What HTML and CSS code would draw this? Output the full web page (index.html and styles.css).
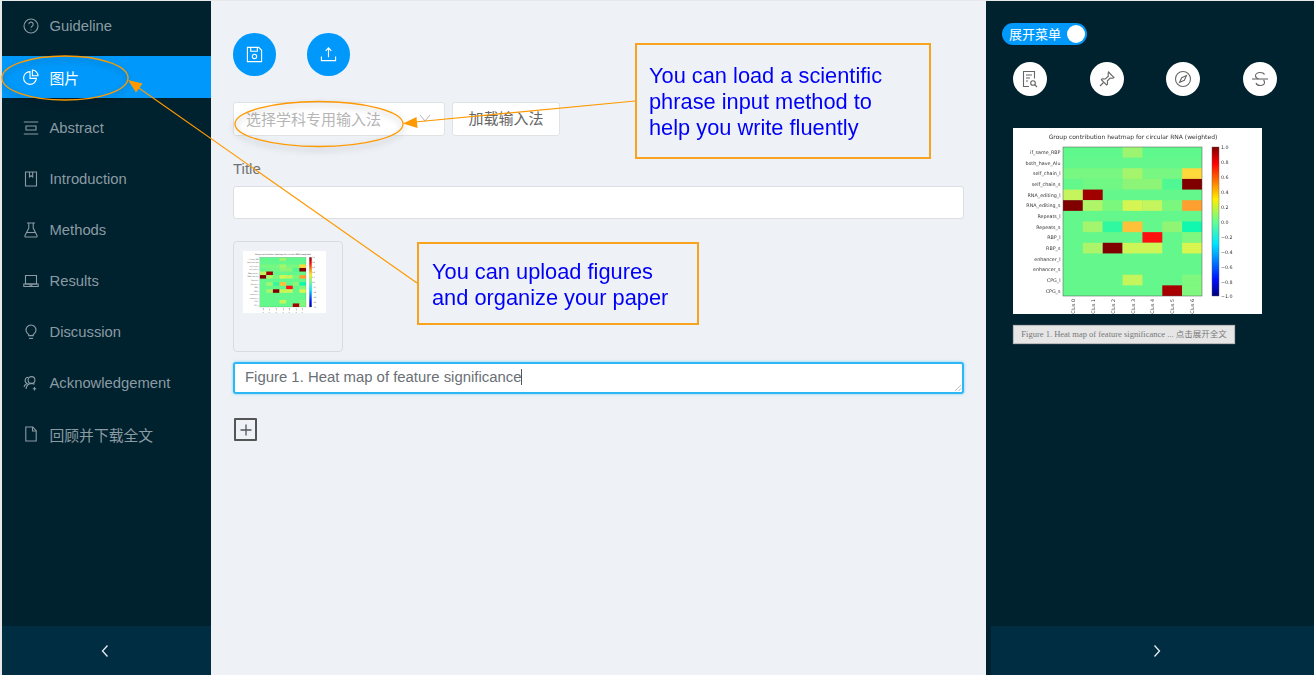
FILE: index.html
```html
<!DOCTYPE html>
<html lang="zh">
<head>
<meta charset="utf-8"/>
<meta content="width=device-width, initial-scale=1.0" name="viewport"/>
<title>Paper editor</title>
<link rel="stylesheet" href="styles.css">
</head>
<body>
<div class="page">
  <aside class="sider">
    <ul class="menu">
      <li class="menu-item">
        <svg class="menu-icon" viewBox="0 0 16 16"><circle cx="8" cy="8" r="7"/><path d="M5.8 6.3a2.2 2.2 0 1 1 3.3 1.9c-.7.4-1.1.8-1.1 1.600"/><path d="M8 11.400v.8"/></svg>
        <span>Guideline</span>
      </li>
      <li class="menu-item active">
        <svg class="menu-icon" viewBox="0 0 16 16"><path d="M7 2.600a6.400 6.400 0 1 0 6.400 6.800H7z"/><path d="M9.400 1a5.800 5.800 0 0 1 5.600 5.800H9.400z"/></svg>
        <span>图片</span>
      </li>
      <li class="menu-item">
        <svg class="menu-icon" viewBox="0 0 16 16"><path d="M.8 2h14.400M.8 14h14.400"/><path d="M3 6h10v4H3z"/></svg>
        <span>Abstract</span>
      </li>
      <li class="menu-item">
        <svg class="menu-icon" viewBox="0 0 16 16"><path d="M2.500 1h11v14h-11z"/><path d="M6.500 1v5l1.600-1.200L9.700 6V1"/></svg>
        <span>Introduction</span>
      </li>
      <li class="menu-item">
        <svg class="menu-icon" viewBox="0 0 16 16"><path d="M4 1h8M5.800 1v5L2 13.600c-.4.8.1 1.400.9 1.400h10.200c.8 0 1.300-.6.9-1.400L10.200 6V1"/><path d="M3.800 10.500h8.400"/></svg>
        <span>Methods</span>
      </li>
      <li class="menu-item">
        <svg class="menu-icon" viewBox="0 0 16 16"><path d="M2.500 2.500h11v8.500h-11z"/><path d="M.8 11h14.400v2.500H.8zM6.500 12.200h3"/></svg>
        <span>Results</span>
      </li>
      <li class="menu-item">
        <svg class="menu-icon" viewBox="0 0 16 16"><path d="M5.700 11.600v-1.200A5 5 0 1 1 10.300 10.400v1.200z"/><path d="M6 14.400h4"/></svg>
        <span>Discussion</span>
      </li>
      <li class="menu-item">
        <svg class="menu-icon" viewBox="0 0 16 16"><circle cx="8.500" cy="5" r="3.400"/><path d="M3 14c.3-3 2.500-5.400 5.500-5.600 1.200 0 2.200.3 3 .9"/><path d="M5.500 2.300A3.200 3.200 0 0 0 4 8.400c-1.600.6-2.600 2-3 3.600M11.500 12v3.400M9.800 13.700h3.400"/></svg>
        <span>Acknowledgement</span>
      </li>
      <li class="menu-item">
        <svg class="menu-icon" viewBox="0 0 16 16"><path d="M2.800 1h7l3.400 3.600V15H2.800z"/><path d="M9.500 1v4h3.700"/></svg>
        <span>回顾并下载全文</span>
      </li>
    </ul>
    <div class="trigger trigger-left">
      <svg class="chevron" viewBox="0 0 10 14"><path d="M7.500 1.500 2.500 7l5 5.500"/></svg>
    </div>
  </aside>

  <main class="content">
    <div class="round-btns">
      <button class="round-btn" type="button">
        <svg viewBox="0 0 18 18"><path d="M1.500 1.500h12l3 3v12h-15z"/><path d="M5 1.500v4h7v-4"/><circle cx="9" cy="11" r="2.300"/></svg>
      </button>
      <button class="round-btn" type="button">
        <svg viewBox="0 0 18 18"><path d="M9 12V2.500M6 5.200 9 2l3 3.200"/><path d="M1.500 11v4.500h15V11"/></svg>
      </button>
    </div>
    <div class="ime-row">
      <div class="select">
        <span>选择学科专用输入法</span>
        <svg class="select-arrow" viewBox="0 0 12 8"><path d="M1 1l5 6 5-6"/></svg>
      </div>
      <button class="btn" type="button">加载输入法</button>
    </div>
    <label class="field-label">Title</label>
    <input class="input" type="text"/>
    <div class="figure-card">
      <svg class="figure-thumb" viewBox="0 0 249 186"><use href="#heatmap"/></svg>
    </div>
    <div class="caption-box">Figure 1. Heat map of feature significance<span class="caret"></span><svg class="grip" viewBox="0 0 8 8"><path d="M1 7 7 1M4.500 7 7 4.500"/></svg></div>
    <button class="add-btn" type="button">
      <svg viewBox="0 0 16 16"><path d="M8 2.500v11M2.500 8h11"/></svg>
    </button>
  </main>

  <aside class="outline">
    <div class="toggle">
      <span>展开菜单</span>
      <i class="toggle-knob"></i>
    </div>
    <div class="tool-row">
      <button class="tool-btn" type="button">
        <svg viewBox="0 0 18 18"><path d="M8 16.500H2.500v-15h11v7"/><path d="M5 5h6M5 8h4M5 11h2"/><circle cx="12" cy="13" r="2.300"/><path d="M13.700 14.700l2.300 2.300"/></svg>
      </button>
      <button class="tool-btn" type="button">
        <svg viewBox="0 0 18 18"><path d="M10.500 2 16 7.500l-1.300.7-2.600-.2-2.800 3 .3 3-1 1-5.300-5.300 1-1 3 .3 3-2.800-.2-2.600z"/><path d="M5.500 12.500 2 16"/></svg>
      </button>
      <button class="tool-btn" type="button">
        <svg viewBox="0 0 18 18"><circle cx="9" cy="9" r="7.500"/><path d="M12.500 5.500 10.300 10.300 5.500 12.500 7.700 7.700z"/></svg>
      </button>
      <button class="tool-btn" type="button">
        <svg viewBox="0 0 18 18"><path d="M1 9h16"/><path d="M13.500 4.500C12.800 3 11 2.500 9 2.500c-2.500 0-4.500 1.300-4.500 3.300 0 1.500 1 2.500 3 3.200M5 13c.5 1.700 2 2.500 4.200 2.500 2.500 0 4.300-1.200 4.300-3.200 0-1-.4-1.700-1-2.300"/></svg>
      </button>
    </div>
    <svg class="figure-preview" viewBox="0 0 249 186">
      <defs>
        <linearGradient id="jet" x1="0" y1="0" x2="0" y2="1">
          <stop offset="0" stop-color="#800000"/>
          <stop offset="0.11" stop-color="#ff0000"/>
          <stop offset="0.35" stop-color="#ffee00"/>
          <stop offset="0.5" stop-color="#66ff90"/>
          <stop offset="0.65" stop-color="#00e5ff"/>
          <stop offset="0.89" stop-color="#0010ff"/>
          <stop offset="1" stop-color="#000080"/>
        </linearGradient>
      </defs>
      <g id="heatmap">
        <rect width="249" height="186" fill="#fff"/>
        <text class="hm-title" x="120" y="11" text-anchor="middle">Group contribution heatmap for circular RNA (weighted)</text>
        <g class="hm-label" text-anchor="end">
          <text x="47.500" y="26">if_same_RBP</text>
          <text x="47.500" y="36.500">both_have_Alu</text>
          <text x="47.500" y="47">self_chain_l</text>
          <text x="47.500" y="58">self_chain_s</text>
          <text x="47.500" y="68.500">RNA_editing_l</text>
          <text x="47.500" y="79">RNA_editing_s</text>
          <text x="47.500" y="90">Repeats_l</text>
          <text x="47.500" y="100.500">Repeats_s</text>
          <text x="47.500" y="111">RBP_l</text>
          <text x="47.500" y="122">RBP_s</text>
          <text x="47.500" y="132.500">enhancer_l</text>
          <text x="47.500" y="143">enhancer_s</text>
          <text x="47.500" y="154">CPG_l</text>
          <text x="47.500" y="164.500">CPG_s</text>
        </g>
        <svg x="50" y="19" width="139" height="149" viewBox="0 0 7 14" preserveAspectRatio="none">
          <rect width="7" height="14" fill="#64f78b"/>
          <rect x="0" y="0" width="7" height="1" fill="#5ff88c"/>
          <rect x="3" y="0" width="1" height="1" fill="#9cf570"/>
          <rect x="0" y="2" width="6" height="1" fill="#78f782"/>
          <rect x="3" y="2" width="1" height="1" fill="#a4f56c"/>
          <rect x="6" y="2" width="1" height="1" fill="#ffd83c"/>
          <rect x="1" y="3" width="2" height="1" fill="#70f784"/>
          <rect x="3" y="3" width="2" height="1" fill="#8cf578"/>
          <rect x="5" y="3" width="1" height="1" fill="#4ff892"/>
          <rect x="6" y="3" width="1" height="1" fill="#800000"/>
          <rect x="0" y="4" width="1" height="1" fill="#c4f55c"/>
          <rect x="1" y="4" width="1" height="1" fill="#a00000"/>
          <rect x="0" y="5" width="1" height="1" fill="#800000"/>
          <rect x="1" y="5" width="1" height="1" fill="#b0f568"/>
          <rect x="2" y="5" width="1" height="1" fill="#7cf77e"/>
          <rect x="3" y="5" width="1" height="1" fill="#d4f552"/>
          <rect x="4" y="5" width="1" height="1" fill="#c4f55c"/>
          <rect x="5" y="5" width="1" height="1" fill="#7cf77e"/>
          <rect x="6" y="5" width="1" height="1" fill="#ff9f30"/>
          <rect x="1" y="7" width="1" height="1" fill="#a4f56e"/>
          <rect x="2" y="7" width="1" height="1" fill="#30f8a0"/>
          <rect x="3" y="7" width="1" height="1" fill="#ffc03a"/>
          <rect x="5" y="7" width="1" height="1" fill="#90f574"/>
          <rect x="6" y="7" width="1" height="1" fill="#10f8b0"/>
          <rect x="4" y="8" width="1" height="1" fill="#ff1010"/>
          <rect x="6" y="8" width="1" height="1" fill="#80f77e"/>
          <rect x="1" y="9" width="1" height="1" fill="#acf56a"/>
          <rect x="2" y="9" width="1" height="1" fill="#800000"/>
          <rect x="3" y="9" width="2" height="1" fill="#ccf558"/>
          <rect x="6" y="9" width="1" height="1" fill="#d8f550"/>
          <rect x="3" y="12" width="1" height="1" fill="#c4f55c"/>
          <rect x="6" y="12" width="1" height="1" fill="#80f77e"/>
          <rect x="5" y="13" width="1" height="1" fill="#a80000"/>
          <rect x="6" y="13" width="1" height="1" fill="#80f77e"/>
        </svg>
        <rect x="50" y="19" width="139" height="149" fill="none" stroke="#555" stroke-width="0.5"/>
        <g class="hm-label" text-anchor="end">
          <text transform="translate(62,171) rotate(-90)">Clus 0</text>
          <text transform="translate(82,171) rotate(-90)">Clus 1</text>
          <text transform="translate(102,171) rotate(-90)">Clus 2</text>
          <text transform="translate(122,171) rotate(-90)">Clus 3</text>
          <text transform="translate(141,171) rotate(-90)">Clus 4</text>
          <text transform="translate(161,171) rotate(-90)">Clus 5</text>
          <text transform="translate(181,171) rotate(-90)">Clus 6</text>
        </g>
        <rect x="199" y="19" width="7" height="149" fill="url(#jet)" stroke="#555" stroke-width="0.4"/>
        <g class="hm-label">
          <text x="208" y="21">1.0</text>
          <text x="208" y="36">0.8</text>
          <text x="208" y="51">0.6</text>
          <text x="208" y="66">0.4</text>
          <text x="208" y="81">0.2</text>
          <text x="208" y="96">0.0</text>
          <text x="208" y="111">−0.2</text>
          <text x="208" y="126">−0.4</text>
          <text x="208" y="141">−0.6</text>
          <text x="208" y="156">−0.8</text>
          <text x="208" y="170">−1.0</text>
        </g>
      </g>
    </svg>
    <div class="preview-caption">Figure 1. Heat map of feature significance ... <span class="cn">点击展开全文</span></div>
    <div class="spacer"></div>
    <div class="trigger trigger-right">
      <svg class="chevron" viewBox="0 0 10 14"><path d="M2.500 1.500 7.500 7l-5 5.500"/></svg>
    </div>
  </aside>
</div>

<!-- annotations drawn on top of the screenshot -->
<svg class="marks" viewBox="0 0 1314 675" width="1314" height="675">
  <ellipse class="ring" cx="65" cy="78" rx="63" ry="22"/>
  <ellipse class="ring" cx="319" cy="124" rx="84" ry="22.500"/>
  <path class="lead" d="M417 283 136 86"/>
  <path class="tip" d="M128 80l14.500 3.500-6.500 9z"/>
  <path class="lead" d="M635 101 415 122"/>
  <path class="tip" d="M403 123.500l13.500-6.500 1 11z"/>
</svg>
<div class="note note-load">You can load a scientific phrase input method to help you write fluently</div>
<div class="note note-upload">You can upload figures and organize your paper</div>
</body>
</html>
```

FILE: styles.css
```css
* { box-sizing: border-box; }
html, body { margin: 0; padding: 0; height: 100%; }
body {
  background: #e6e8ea;
  font-family: "Liberation Sans", "Noto Sans CJK SC", sans-serif;
  font-size: 14px;
  color: #666;
  overflow: hidden;
}
.page { display: flex; height: 674px; margin: 1px 0 0 2px; }

/* left menu */
.sider { width: 209px; background: #00212e; display: flex; flex-direction: column; justify-content: space-between; }
.menu { list-style: none; margin: 0; padding: 4px 0 0; display: flex; flex-direction: column; gap: 9px; }
.menu-item { height: 42px; display: flex; align-items: center; gap: 10.500px; padding-left: 21px; color: #8b9ba3; font-size: 14.800px; }
.menu-item.active { background: #0099fb; color: #fff; }
.menu-icon { width: 16px; height: 16px; fill: none; stroke: currentColor; stroke-width: 1.100; flex: none; }
.trigger { height: 49px; background: #002d42; display: flex; align-items: center; justify-content: center; }
.trigger-left { padding-right: 3px; }
.trigger-right { margin-left: 5px; padding-left: 8px; }
.chevron { width: 10px; height: 14px; fill: none; stroke: #e8edf0; stroke-width: 1.300; }

/* editor */
.content { width: 775px; background: #eef2f6; padding: 32px 22px 0; }
.round-btns { display: flex; gap: 31.500px; margin-bottom: 26.500px; }
.round-btn { width: 42.500px; height: 42.500px; border: 0; border-radius: 50%; padding: 0; background: #0099fb; display: flex; align-items: center; justify-content: center; }
.round-btn svg { width: 17px; height: 17px; fill: none; stroke: #fff; stroke-width: 1.200; }
.ime-row { display: flex; gap: 7px; margin-bottom: 24px; }
.select { width: 212px; height: 34px; background: #fff; border: 1px solid #dfe3e6; border-radius: 3px; display: flex; align-items: center; justify-content: space-between; padding: 0 13px 2px 12px; color: #b5b5b5; font-size: 15px; }
.select-arrow { width: 12px; height: 8px; fill: none; stroke: #b5b5b5; stroke-width: 1; }
.btn { width: 108px; height: 34px; background: #fff; border: 1px solid #dfe3e6; border-radius: 3px; color: #666; font: inherit; font-size: 15px; padding: 0 0 3px; }
.field-label { display: block; font-size: 15px; line-height: 17px; margin-bottom: 9px; color: #6e7276; }
.input { display: block; width: 100%; height: 33px; background: #fff; border: 1px solid #dcdfe2; border-radius: 3px; margin-bottom: 22px; }
.figure-card { width: 110px; height: 111px; border: 1px solid #d9dcdf; border-radius: 4px; padding: 9px; margin-bottom: 10px; }
.figure-thumb { display: block; width: 83px; height: 62px; filter: blur(0.4px); }
.caption-box { position: relative; height: 32px; background: #fff; border: 2px solid #2db7f5; border-radius: 3px; box-shadow: 0 0 3px rgba(45, 183, 245, 0.6); padding: 0 10px; line-height: 27px; font-size: 14.900px; color: #6b7076; margin-bottom: 24px; }
.caret { display: inline-block; width: 1px; height: 16px; background: #555; vertical-align: -3px; }
.grip { position: absolute; right: 0; bottom: 0; width: 8px; height: 8px; fill: none; stroke: #aaa; stroke-width: 0.800; }
.add-btn { display: flex; align-items: center; justify-content: center; width: 23px; height: 23px; margin-left: 1px; padding: 0; background: transparent; border: 2px solid #555; border-radius: 1px; }
.add-btn svg { width: 16px; height: 16px; fill: none; stroke: #555; stroke-width: 1.300; }

/* right panel */
.outline { flex: 1; background: #00212e; display: flex; flex-direction: column; }
.toggle { width: 85px; height: 22px; margin: 22px 0 0 16px; border-radius: 11px; background: #0099fb; color: #fff; font-size: 13px; display: flex; align-items: center; justify-content: space-between; padding: 0 2px 2px 7px; }
.toggle-knob { width: 18px; height: 18px; margin-bottom: -2px; border-radius: 50%; background: #fff; }
.tool-row { display: flex; gap: 42.500px; margin: 17px 0 0 27px; }
.tool-btn { width: 34px; height: 34px; border: 0; border-radius: 50%; padding: 0; background: #fff; display: flex; align-items: center; justify-content: center; }
.tool-btn svg { width: 18px; height: 18px; fill: none; stroke: #666; stroke-width: 1.100; }
.figure-preview { display: block; width: 249px; height: 186px; margin: 32px 0 0 27px; flex: none; filter: blur(0.4px); }
.preview-caption { width: 222px; height: 19px; margin: 11px 0 0 27px; background: #e6e6e6; border: 1px solid #bbb; box-shadow: 0 0 1px #888; font-family: "Liberation Serif", "Noto Sans CJK SC", serif; font-size: 8.500px; line-height: 17px; text-align: center; color: #777; white-space: nowrap; }
.spacer { flex: 1; }

/* heatmap */
.hm-title { font-family: "DejaVu Sans", sans-serif; font-size: 6px; fill: #333; }
.hm-label { font-family: "DejaVu Sans", sans-serif; font-size: 4.800px; fill: #333; }

/* annotations */
.marks { position: absolute; left: 0; top: 0; pointer-events: none; }
.ring { fill: none; stroke: #f90; stroke-width: 1.300; filter: drop-shadow(0 3px 3px rgba(0, 0, 0, 0.3)); }
.lead { fill: none; stroke: #f90; stroke-width: 1.200; }
.tip { fill: #f90; }
.note { position: absolute; border: 2px solid #f9a21e; color: #0000f5; font-size: 21.800px; line-height: 26px; }
.note-load { left: 635px; top: 43px; width: 296px; height: 116px; padding: 18px 12px; }
.note-upload { left: 417px; top: 242px; width: 282px; height: 83px; padding: 15px 13px; }
```
